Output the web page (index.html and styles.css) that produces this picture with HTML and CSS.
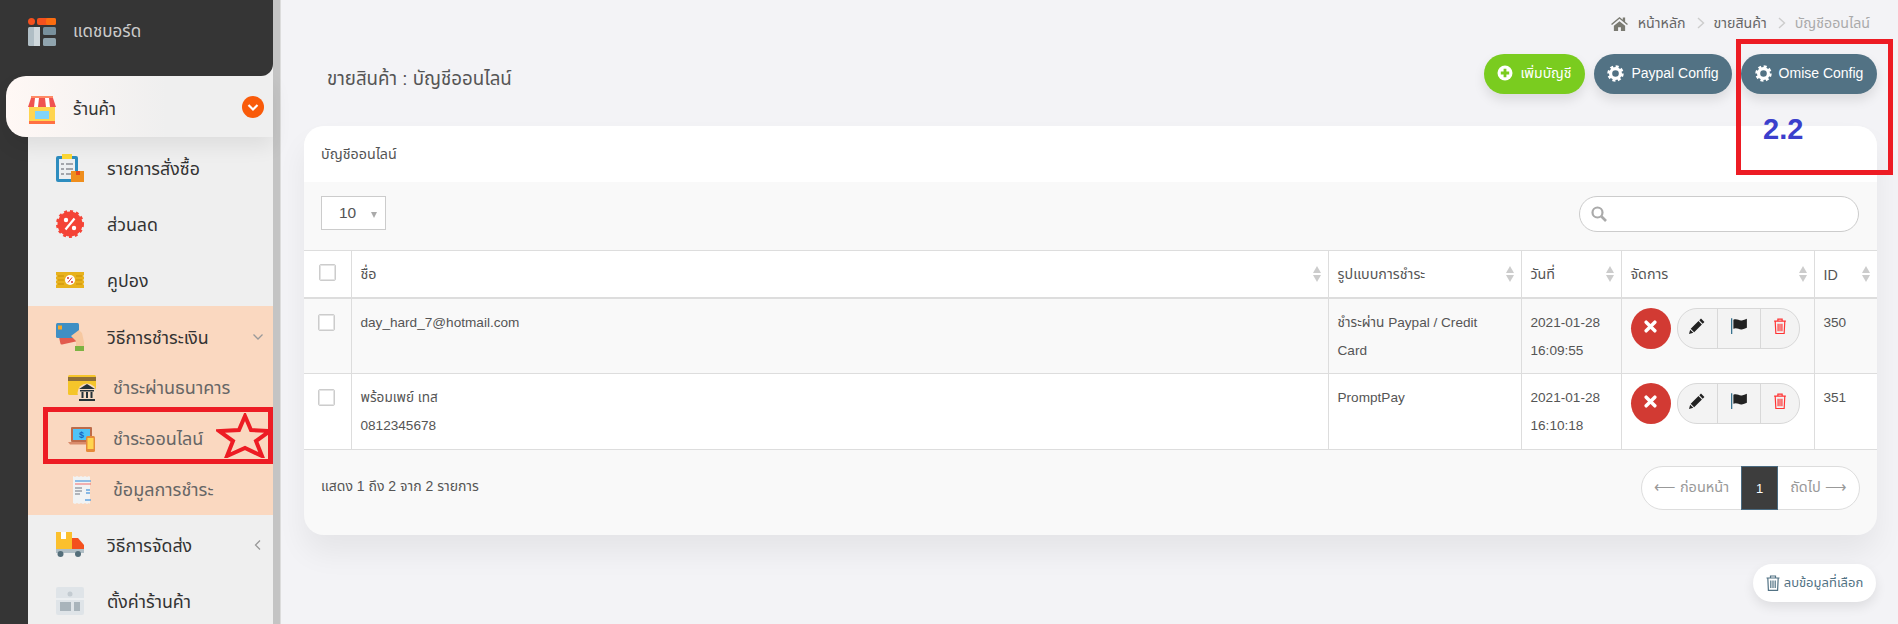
FILE: index.html
```html
<!DOCTYPE html>
<html lang="th">
<head>
<meta charset="utf-8">
<title>บัญชีออนไลน์</title>
<link rel="stylesheet" href="styles.css">
</head>
<body>
<div class="page">
  <aside class="sidebar">
    <div class="brand-wrap">
      <div class="brand">
        <svg class="ic28" viewBox="0 0 28 28"><circle cx="3.5" cy="3.5" r="3.5" fill="#f4511e"/><rect x="9" y="0" width="19" height="7" rx="2" fill="#f4511e"/><rect x="18" y="0" width="10" height="7" rx="2" fill="#fb6d10"/><rect x="0" y="9" width="12" height="19" rx="1.5" fill="#b0bec5"/><rect x="6" y="9" width="6" height="19" fill="#cfd8dc"/><rect x="15" y="9" width="13" height="8" rx="1.5" fill="#78909c"/><rect x="15" y="20" width="13" height="8" rx="1.5" fill="#90a4ae"/></svg>
        <span>แดชบอร์ด</span>
      </div>
    </div>
    <nav class="menu">
      <a class="active-item">
        <svg class="ic28" viewBox="0 0 28 28"><rect x="1" y="10" width="26" height="15" fill="#ffd54f"/><rect x="1" y="25" width="26" height="3" fill="#ff7043"/><rect x="7" y="15" width="14" height="8" fill="#81d4fa"/><rect x="3" y="0" width="22" height="3" fill="#ff8a65"/><path d="M3 2h22l3 9H0z" fill="#fff"/><path d="M3 2h4l-1 9H0zM11 2h6l1 9h-8zM21 2h4l3 9h-6z" fill="#ef5350"/></svg>
        <span class="active-label">ร้านค้า</span>
        <span class="badge"><svg viewBox="0 0 22 22" width="22" height="22"><path d="M6.5 9l4.500 4.500 4.500-4.500" fill="none" stroke="#fff" stroke-width="2.200"/></svg></span>
      </a>
      <div class="items">
        <a class="item">
          <svg class="ic28" viewBox="0 0 28 28"><rect x="0" y="2" width="22" height="26" rx="2" fill="#2e8dbf"/><rect x="3" y="5" width="16" height="20" fill="#eceff1"/><path d="M6 0h10v5H6z" fill="#fdd835"/><path d="M5 10h3M10 10h7M5 15h3M10 15h7M5 20h3M10 20h5" stroke="#8a8f94" stroke-width="1.300"/><rect x="15" y="17" width="13" height="11" fill="#ef8e1d"/><rect x="20" y="17" width="4" height="4" fill="#e64a19"/></svg>
          <span>รายการสั่งซื้อ</span>
        </a>
        <a class="item">
          <svg class="ic28" viewBox="0 0 28 28"><circle cx="14" cy="14" r="12.500" fill="#f44336"/><circle cx="14" cy="14" r="12.800" fill="none" stroke="#f44336" stroke-width="2.400" stroke-dasharray="3 3"/><path d="M18.500 8.500l-9 11" stroke="#fff" stroke-width="2.200"/><circle cx="10" cy="10" r="2.200" fill="#fff"/><circle cx="18" cy="18" r="2.200" fill="#fff"/></svg>
          <span>ส่วนลด</span>
        </a>
        <a class="item">
          <svg class="ic28" viewBox="0 0 28 28"><path d="M0 6h28v3l-1 1 1 1v2l-1 1 1 1v2l-1 1 1 1v3H0v-3l1-1-1-1v-2l1-1-1-1v-2l1-1-1-1z" fill="#e8b21d"/><path d="M2 10h6M2 14h6M2 18h6M20 10h6M20 14h6M20 18h6" stroke="#c98f0a" stroke-width="1.200"/><circle cx="14" cy="14" r="5" fill="#fff"/><path d="M16 11.500l-4 5" stroke="#d32f2f" stroke-width="1"/><circle cx="12" cy="12" r="1" fill="#d32f2f"/><circle cx="16" cy="16" r="1" fill="#d32f2f"/></svg>
          <span>คูปอง</span>
        </a>
      </div>
      <div class="group">
        <a class="item head">
          <svg class="ic28" viewBox="0 0 28 28"><rect x="3" y="7" width="18" height="13" rx="1.500" fill="#e25b4e" transform="rotate(-12 12 13)"/><rect x="0" y="0" width="23" height="15" rx="1.500" fill="#3f8fc4"/><rect x="2" y="2.500" width="4" height="4" fill="#f9a825"/><path d="M15 13l8-6 3 3 2 9v4H20v-5z" fill="#f6c8a0"/><rect x="19" y="23" width="9" height="5" fill="#7cb342"/></svg>
          <span>วิธีการชำระเงิน</span>
          <svg class="caret" viewBox="0 0 12 12"><path d="M1.500 3.500L6 8l4.500-4.500" fill="none" stroke="#999" stroke-width="1.300"/></svg>
        </a>
        <a class="sub">
          <svg class="ic28" viewBox="0 0 28 28"><rect x="0" y="1" width="28" height="20" rx="1.500" fill="#f5c52a"/><rect x="0" y="3" width="28" height="4" fill="#8d6e37"/><circle cx="19" cy="19" r="9.500" fill="#f8dcc4"/><path d="M19 10l8 5H11zM12 16h14v1.500H12zM13.500 18h2v6h-2zM18 18h2v6h-2zM22.500 18h2v6h-2zM11 25h16v2H11z" fill="#263238"/></svg>
          <span>ชำระผ่านธนาคาร</span>
        </a>
        <a class="sub">
          <svg class="ic28" viewBox="0 0 28 28"><rect x="3" y="2" width="21" height="15" rx="1" fill="#bd6b4a"/><rect x="5" y="4" width="17" height="11" fill="#4fc3f7"/><text x="13.500" y="13" class="dollar">$</text><path d="M0 17h25v2.500H2z" fill="#d98b6b"/><rect x="18" y="11" width="9" height="16" rx="1.500" fill="#e58a3a"/><rect x="19.500" y="13" width="6" height="11" fill="#ffd54f"/></svg>
          <span>ชำระออนไลน์</span>
        </a>
        <a class="sub">
          <svg class="ic28" viewBox="0 0 28 28"><path d="M5 0l2 1 2-1 2 1 2-1 2 1 2-1 2 1 2-1 1 1v27l-1-1-2 1-2-1-2 1-2-1-2 1-2-1-2 1-2-1z" fill="#f1f3f4"/><path d="M7 5h16" stroke="#64a5e0" stroke-width="1.400"/><path d="M7 8h16" stroke="#ef6c6c" stroke-width="1"/><path d="M7 12h7M7 15h7M7 18h5" stroke="#9aa0a6" stroke-width="1.500"/><path d="M18 14h4M18 17h4M17 24h6" stroke="#64a5e0" stroke-width="1.400"/></svg>
          <span>ข้อมูลการชำระ</span>
        </a>
      </div>
      <div class="items tail">
        <a class="item">
          <svg class="ic28" viewBox="0 0 28 28"><rect x="0" y="1" width="16" height="17" fill="#fbc02d"/><rect x="5" y="1" width="5" height="7" fill="#fff"/><path d="M16 7h6l6 7v8H16z" fill="#f4511e"/><rect x="0" y="18" width="28" height="4" fill="#b0bec5"/><circle cx="4.500" cy="23" r="3" fill="#546e7a"/><circle cx="22" cy="23" r="3" fill="#546e7a"/></svg>
          <span>วิธีการจัดส่ง</span>
          <svg class="caret" viewBox="0 0 12 12"><path d="M8 1.500L3.500 6 8 10.500" fill="none" stroke="#999" stroke-width="1.300"/></svg>
        </a>
        <a class="item">
          <svg class="ic28" viewBox="0 0 28 28"><rect width="28" height="28" rx="2" fill="#dfe4e8"/><path d="M0 11h28v2H0z" fill="#eceff1"/><rect x="4" y="15" width="11" height="9" fill="#a9b4bb"/><rect x="18" y="15" width="6" height="9" fill="#a9b4bb"/><circle cx="14" cy="7" r="2.500" fill="#c3cbd1"/></svg>
          <span>ตั้งค่าร้านค้า</span>
        </a>
      </div>
    </nav>
  </aside>
  <div class="rail"></div>
  <main class="main">
    <div class="crumbs">
      <svg class="home" viewBox="0 0 18 16"><path d="M9 1L0 8.500l1 1.200L9 3l8 6.700 1-1.200-3-2.500V1.500h-2.500v2.400zM3 10.500V16h4.500v-4h3v4H15v-5.500L9 5.500z" fill="#7a7a72"/></svg>
      <span class="crumb">หน้าหลัก</span>
      <svg class="sep" viewBox="0 0 8 12"><path d="M1 1l5.500 5L1 11" fill="none" stroke="#ccc" stroke-width="1.400"/></svg>
      <span class="crumb">ขายสินค้า</span>
      <svg class="sep" viewBox="0 0 8 12"><path d="M1 1l5.500 5L1 11" fill="none" stroke="#ccc" stroke-width="1.400"/></svg>
      <span class="crumb last">บัญชีออนไลน์</span>
    </div>
    <div class="headbar">
      <h1 class="title">ขายสินค้า : บัญชีออนไลน์</h1>
      <div class="actions">
        <button class="btn green"><svg class="btn-ic" viewBox="0 0 16 16"><circle cx="8" cy="8" r="7.500" fill="#fff"/><path d="M8 3.800v8.400M3.800 8h8.400" stroke="#7acc1f" stroke-width="2.800"/></svg><span>เพิ่มบัญชี</span></button>
        <button class="btn slate wide"><svg class="btn-ic gear" viewBox="0 0 18 18"><circle cx="9" cy="9" r="5.200" fill="none" stroke="#fff" stroke-width="3.400"/><circle cx="9" cy="9" r="7.400" fill="none" stroke="#fff" stroke-width="2.600" stroke-dasharray="3.200 2.600"/></svg><span>Paypal Config</span></button>
        <button class="btn slate"><svg class="btn-ic gear" viewBox="0 0 18 18"><circle cx="9" cy="9" r="5.200" fill="none" stroke="#fff" stroke-width="3.400"/><circle cx="9" cy="9" r="7.400" fill="none" stroke="#fff" stroke-width="2.600" stroke-dasharray="3.200 2.600"/></svg><span>Omise Config</span></button>
      </div>
    </div>
    <section class="card">
      <div class="card-head">บัญชีออนไลน์</div>
      <div class="toolbar">
        <div class="select"><span>10</span><i class="select-arrow"></i></div>
        <div class="search"><svg viewBox="0 0 16 16" width="16" height="16"><circle cx="6.500" cy="6.500" r="5" fill="none" stroke="#aaa" stroke-width="2.200"/><path d="M10.500 10.500l4.500 4.500" stroke="#aaa" stroke-width="2.600"/></svg></div>
      </div>
      <table class="grid">
        <colgroup><col class="c1"><col><col class="c3"><col class="c4"><col class="c5"><col class="c6"></colgroup>
        <thead>
          <tr>
            <th class="check-h"><i class="box"></i></th>
            <th class="sort">ชื่อ</th>
            <th class="sort">รูปแบบการชำระ</th>
            <th class="sort">วันที่</th>
            <th class="sort">จัดการ</th>
            <th class="sort">ID</th>
          </tr>
        </thead>
        <tbody>
          <tr class="odd">
            <td class="check"><i class="box"></i></td>
            <td>day_hard_7@hotmail.com</td>
            <td class="pay">ชำระผ่าน Paypal / Credit Card</td>
            <td>2021-01-28 16:09:55</td>
            <td>
              <div class="row-actions">
                <span class="close"><svg viewBox="0 0 12 12" width="13" height="13"><path d="M2 2l8 8M10 2l-8 8" stroke="#fff" stroke-width="3.200" stroke-linecap="round"/></svg></span>
                <span class="tools">
                  <span class="tool w41"><svg viewBox="0 0 14 14" width="16" height="16"><path d="M10.500 0.500l3 3-1.500 1.500-3-3zM8.300 2.700l3 3L4.500 12.500l-3-3zM1 10.200l2.800 2.800L0 14z" fill="#222"/></svg></span>
                  <span class="tool w43"><svg viewBox="0 0 16 14" width="18" height="16"><path d="M1 0h1v14H1z" fill="#1d5f80"/><path d="M3 1.500c3-1.500 5 1 7.500.5 1.500-.3 3-.8 4.500-1.500v8c-1.500.8-3 1.300-4.500 1.500-2.500.4-4.500-2-7.500-.5z" fill="#222"/></svg></span>
                  <span class="tool"><svg viewBox="0 0 13 15" width="14" height="16"><path d="M1 3h11M4.500 3V1h4v2M2 3l.6 11.500h7.800L11 3M4.700 5.500v7M6.500 5.500v7M8.300 5.500v7" fill="none" stroke="#f33" stroke-width="1.100"/></svg></span>
                </span>
              </div>
            </td>
            <td>350</td>
          </tr>
          <tr>
            <td class="check"><i class="box"></i></td>
            <td>พร้อมเพย์ เทส<br>0812345678</td>
            <td class="pay">PromptPay</td>
            <td>2021-01-28 16:10:18</td>
            <td>
              <div class="row-actions">
                <span class="close"><svg viewBox="0 0 12 12" width="13" height="13"><path d="M2 2l8 8M10 2l-8 8" stroke="#fff" stroke-width="3.200" stroke-linecap="round"/></svg></span>
                <span class="tools">
                  <span class="tool w41"><svg viewBox="0 0 14 14" width="16" height="16"><path d="M10.500 0.500l3 3-1.500 1.500-3-3zM8.300 2.700l3 3L4.500 12.500l-3-3zM1 10.200l2.800 2.800L0 14z" fill="#222"/></svg></span>
                  <span class="tool w43"><svg viewBox="0 0 16 14" width="18" height="16"><path d="M1 0h1v14H1z" fill="#1d5f80"/><path d="M3 1.500c3-1.500 5 1 7.500.5 1.500-.3 3-.8 4.500-1.500v8c-1.500.8-3 1.300-4.500 1.500-2.500.4-4.500-2-7.500-.5z" fill="#222"/></svg></span>
                  <span class="tool"><svg viewBox="0 0 13 15" width="14" height="16"><path d="M1 3h11M4.500 3V1h4v2M2 3l.6 11.500h7.800L11 3M4.700 5.500v7M6.500 5.500v7M8.300 5.500v7" fill="none" stroke="#f33" stroke-width="1.100"/></svg></span>
                </span>
              </div>
            </td>
            <td>351</td>
          </tr>
        </tbody>
      </table>
      <div class="card-foot">
        <span>แสดง 1 ถึง 2 จาก 2 รายการ</span>
        <div class="pager">
          <span class="pg prev">⟵ ก่อนหน้า</span>
          <span class="pg current">1</span>
          <span class="pg next">ถัดไป ⟶</span>
        </div>
      </div>
    </section>
    <div class="bottom">
      <button class="del"><svg viewBox="0 0 14 16" width="14" height="16"><path d="M.5 3h13M4.500 3V1h5v2M1.800 3l.6 12.300h9.200L12.200 3M4.800 5.500v7.500M7 5.500v7.500M9.200 5.500v7.500" fill="none" stroke="#527284" stroke-width="1.200"/></svg><span>ลบข้อมูลที่เลือก</span></button>
    </div>
  </main>
  <div class="mark mark-menu"></div>
  <svg class="star" viewBox="0 0 57 45"><path d="M29 3l6 14 19 1-14 10 6 15-17-8-18 8 6-15L3 18l20-1z" fill="none" stroke="#ed1c24" stroke-width="4"/></svg>
  <div class="mark mark-btn"></div>
  <div class="mark-label">2.2</div>
</div>
</body>
</html>
```
FILE: styles.css
```css
* { box-sizing: border-box; }
html, body { margin: 0; padding: 0; height: 624px; overflow: hidden; }
body { font-family: "Liberation Sans", "Noto Sans Thai", "Noto Sans", sans-serif; font-size: 13.6px; color: #555; background: #f3f3f6; }
.page { position: relative; display: flex; width: 1898px; height: 624px; overflow: hidden; }

.sidebar { width: 273px; flex: none; background: #353535; display: flex; flex-direction: column; }
.rail { width: 8px; flex: none; background: #c4c4c4; border-right: 1px solid #dcdcdc; }
.ic28 { width: 28px; height: 28px; flex: none; }

.brand-wrap { background: #efefef; height: 76px; }
.brand { height: 76px; background: #353535; border-bottom-right-radius: 12px; display: flex; align-items: center; padding: 0 0 12px 28px; gap: 17px; color: #ccc; font-size: 17px; }

.menu { flex: 1; margin-left: 28px; background: #efefef; }
.active-item { position: relative; z-index: 1; display: flex; align-items: center; height: 61px; margin-left: -22px; padding: 7px 0 0 22px; gap: 17px; border-radius: 20px 0 0 20px; background: linear-gradient(90deg, #fff8f5, #efefef 60%); box-shadow: 0 10px 20px rgba(0,0,0,.07); color: #333; font-size: 17px; }
.active-label { flex: 1; }
.badge { width: 22px; height: 22px; border-radius: 50%; background: #f95b0a; margin: 0 9px 7px 0; display: flex; }

.items { display: flex; flex-direction: column; gap: 2px; padding-top: 3px; }
.items.tail { padding-top: 2px; }
.item { display: flex; align-items: center; height: 54px; padding: 2px 0 0 28px; gap: 23px; color: #333; font-size: 17.8px; }
.item span { flex: 1; padding-top: 3px; }
.caret { width: 12px; height: 12px; margin-right: 9px; flex: none; }
.group { background: #fad8c0; padding-top: 4px; height: 209px; }
.head { height: 52px; }
.sub { display: flex; align-items: center; height: 51px; padding-left: 40px; gap: 17px; color: #666; font-size: 18px; }
.sub span { padding-top: 2px; }

.main { flex: 1; padding: 0 21px 0 23px; min-width: 0; }
.crumbs { height: 54px; padding: 0 7px 8px 0; display: flex; align-items: center; justify-content: flex-end; color: #666; font-size: 14.2px; }
.home { width: 17px; height: 15px; margin-right: 10px; }
.sep { width: 8px; height: 12px; margin: 0 9px 0 11px; }
.crumb.last { color: #aaa; }

.headbar { display: flex; justify-content: space-between; align-items: center; height: 40px; margin-bottom: 32px; padding-left: 23px; }
.title { margin: 0; padding-top: 9px; font-size: 18.700px; font-weight: 400; color: #555; }
.actions { display: flex; gap: 9px; }
.btn { display: flex; align-items: center; justify-content: center; height: 40px; padding: 0; gap: 7px; border: 0; border-radius: 20px; color: #fff; font: inherit; font-size: 14px; box-shadow: 0 6px 12px rgba(0,0,0,.1); }
.btn span { position: relative; top: -1px; }
.btn-ic { width: 16px; height: 16px; flex: none; margin-bottom: 2px; }
.gear { width: 17px; height: 17px; }
.green { background: #7acc1f; width: 101px; }
.slate { background: #527284; width: 136px; }
.slate.wide { width: 138px; }

.card { height: 409px; border-radius: 20px; background: #f9f9f9; box-shadow: 0 18px 30px rgba(0,0,0,.06); }
.card-head { height: 56px; padding: 0 17px; display: flex; align-items: center; background: #fff; border-radius: 20px 20px 0 0; font-size: 14.300px; }
.toolbar { height: 68px; padding: 14px 18px 0 17px; display: flex; justify-content: space-between; align-items: flex-start; }
.select { width: 65px; height: 34px; border: 1px solid #ccc; background: #fff; display: flex; align-items: center; padding-left: 17px; font-size: 15.500px; position: relative; }
.select-arrow { position: absolute; right: 8px; top: 15px; border: 3.500px solid transparent; border-top: 6px solid #aaa; }
.search { width: 280px; height: 36px; border: 1px solid #ccc; border-radius: 18px; background: #fff; display: flex; align-items: center; padding-left: 11px; }

.grid { width: 100%; table-layout: fixed; border-collapse: collapse; font-size: 13.6px; color: #555; }
.c1 { width: 47px; } .c3 { width: 193px; } .c4 { width: 100px; } .c5 { width: 193px; } .c6 { width: 63px; }
.grid th { height: 47px; padding: 2px 9px 0; text-align: left; font-size: 14.300px; font-weight: 400; background: #fff; border: 1px solid #ddd; border-bottom: 2px solid #ddd; border-left-width: 0; border-right-width: 1px; }
.grid th:last-child, .grid td:last-child { border-right: 0; }
.grid th.sort { position: relative; }
.grid th.sort::before, .grid th.sort::after { content: ""; position: absolute; right: 7px; border: 4.500px solid transparent; }
.grid th.sort::before { top: 15px; border-top: 0; border-bottom: 7px solid #ccc; }
.grid th.sort::after { top: 24px; border-bottom: 0; border-top: 7px solid #ccc; }
.grid td { padding: 10px 9px 8px; height: 76px; line-height: 28px; vertical-align: top; background: #fff; border-right: 1px solid #ddd; border-bottom: 1px solid #ddd; }
.grid td.pay { padding-right: 24px; }
.grid .odd td { background: #f9f9f9; }
.check-h { text-align: center !important; padding: 0 !important; }
.grid .check { padding: 15px 0 0 14px; line-height: 0; }
.box { display: inline-block; width: 17px; height: 17px; background: #fff; border: 1px solid #ccc; box-shadow: inset 0 0 0 1px #e4e4e4; border-radius: 2px; }

.row-actions { display: flex; gap: 6px; margin-top: -1px; }
.close { width: 40px; height: 41px; border-radius: 50%; background: #d23a33; display: flex; align-items: center; justify-content: center; flex: none; padding-bottom: 4px; }
.tools { display: flex; width: 123px; height: 41px; background: #f3f3f3; border: 1px solid #d8d8d8; border-radius: 20px; flex: none; }
.tool { display: flex; align-items: center; justify-content: center; flex: 1; padding-bottom: 5px; }
.w41 { flex: none; width: 40px; border-right: 1px solid #d8d8d8; }
.w43 { flex: none; width: 43px; border-right: 1px solid #d8d8d8; }

.card-foot { height: 80px; padding: 16px 17px 0 17px; display: flex; justify-content: space-between; align-items: flex-start; }
.card-foot > span { line-height: 40px; font-size: 14px; }
.pager { display: flex; height: 44px; width: 219px; background: #fff; border: 1px solid #ddd; border-radius: 22px; color: #999; font-size: 14.500px; }
.pg { display: flex; align-items: center; justify-content: center; }
.prev { width: 99px; }
.current { width: 37px; margin: -1px 0; background: #3d3d3d; border: 1px solid #4a6a80; color: #fff; font-size: 13px; }
.next { flex: 1; }

.bottom { display: flex; justify-content: flex-end; padding: 29px 1px 0 0; }
.del { display: flex; align-items: center; justify-content: center; gap: 4px; width: 123px; height: 38px; background: #fff; border: 0; border-radius: 19px; color: #527284; font: inherit; font-size: 13px; box-shadow: 0 5px 12px rgba(0,0,0,.09); padding: 0; }

.mark { position: absolute; border: 5px solid #ed1c24; pointer-events: none; }
.mark-menu { left: 43px; top: 407px; width: 230px; height: 57px; }
.mark-btn { left: 1736px; top: 39px; width: 157px; height: 136px; }
.star { position: absolute; left: 216px; top: 413px; width: 57px; height: 45px; }
.mark-label { position: absolute; left: 1763px; top: 113px; font: 700 29px/33px "Liberation Sans", sans-serif; color: #3b3fcc; }
.dollar { font: 700 9px "Liberation Sans", sans-serif; fill: #1565c0; text-anchor: middle; }
```
